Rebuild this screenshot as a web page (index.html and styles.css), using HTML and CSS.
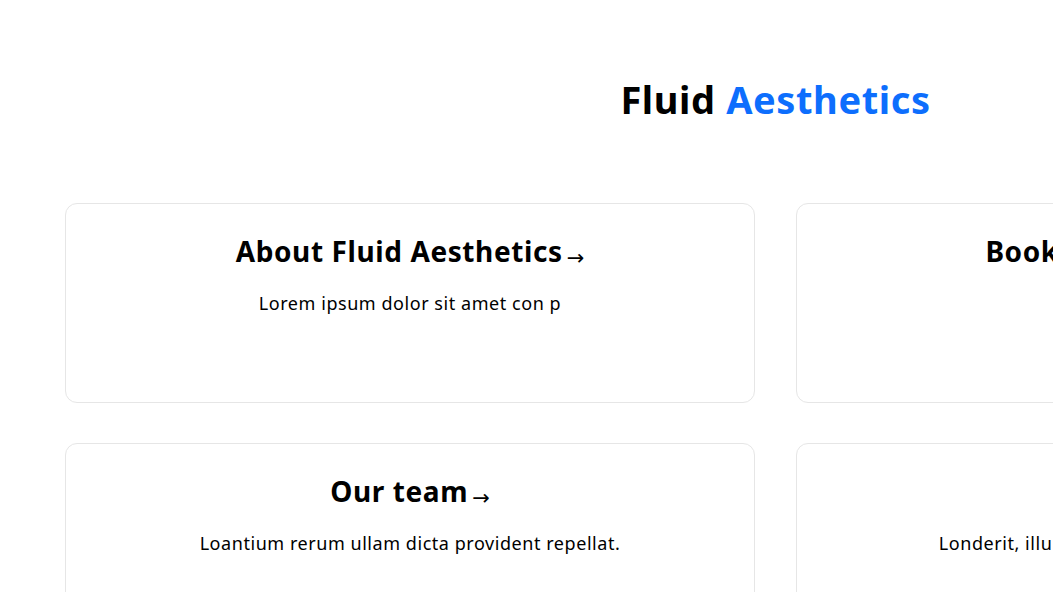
FILE: index.html
```html
<!DOCTYPE html>
<html lang="en">
<head>
<meta charset="utf-8">
<title>Fluid Aesthetics</title>
<link rel="stylesheet" href="styles.css">
</head>
<body>
<div class="page">
  <header class="hero">
    <h1 class="title">Fluid <span class="accent">Aesthetics</span></h1>
  </header>
  <main class="grid">
    <a class="card" href="#about">
      <h2 class="card-title">About Fluid Aesthetics<span class="arrow">→</span></h2>
      <p class="card-text">Lorem ipsum dolor sit amet con p</p>
    </a>
    <a class="card" href="#book">
      <h2 class="card-title">Book a consultation<span class="arrow">→</span></h2>
      <p class="card-text">Dolor sit amet.</p>
    </a>
    <a class="card" href="#team">
      <h2 class="card-title">Our team<span class="arrow">→</span></h2>
      <p class="card-text">Loantium rerum ullam dicta provident repellat.</p>
    </a>
    <a class="card" href="#contact">
      <h2 class="card-title">Contact<span class="arrow">→</span></h2>
      <p class="card-text">Londerit, illum quibusdam dolorem nostrum.</p>
    </a>
  </main>
</div>
</body>
</html>
```

FILE: styles.css
```css
* { box-sizing: border-box; }
html, body { margin: 0; padding: 0; background: #fff; }
body {
  font-family: "Noto Sans", "Open Sans", sans-serif;
  color: #000;
}
.page {
  width: max-content;
}
.hero {
  padding: 76px 0 0;
  text-align: center;
}
.title {
  margin: 0;
  font-size: 38px;
  line-height: 46px;
  font-weight: 700;
  letter-spacing: 0.6px;
}
.accent { color: #0d6efd; }
.grid {
  display: grid;
  grid-template-columns: repeat(2, 690px);
  gap: 40px 41px;
  padding: 81px 65px 40px;
}
.card {
  display: block;
  height: 200px;
  border: 1px solid #e6e6e6;
  border-radius: 12px;
  padding: 30px 24px;
  text-align: center;
  color: #000;
  text-decoration: none;
}
.card-title {
  margin: 0;
  font-size: 28px;
  line-height: 34px;
  font-weight: 700;
  letter-spacing: 0.6px;
}
.arrow {
  font-family: "DejaVu Sans", sans-serif;
  font-size: 21px;
  font-weight: 400;
  letter-spacing: 0;
  margin-left: 4px;
  vertical-align: -3px;
}
.card-text {
  margin: 15px 0 0;
  font-size: 18px;
  line-height: 27px;
  letter-spacing: 0.55px;
}
```
